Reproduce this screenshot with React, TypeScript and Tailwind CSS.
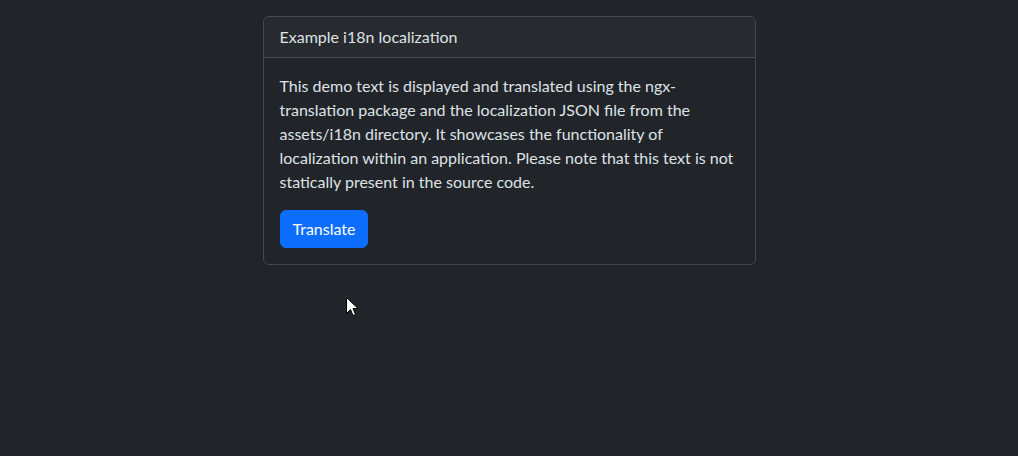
const lines = [
  "This demo text is displayed and translated using the ngx-",
  "translation package and the localization JSON file from the",
  "assets/i18n directory. It showcases the functionality of",
  "localization within an application. Please note that this text is not",
  "statically present in the source code.",
];

const Cursor = () => (
  <svg
    className="absolute left-[346px] top-[297px]"
    width="13"
    height="20"
    viewBox="0 0 13 20"
  >
    <path
      d="M0.5 0.5 L0.5 16.5 L4.5 12.5 L7 18.5 L9.5 17.5 L7 11.5 L12 11.5 Z"
      fill="#ffffff"
      stroke="#000000"
      strokeWidth="1"
      strokeLinejoin="miter"
    />
  </svg>
);

const App = () => {
  return (
    <div
      className="relative min-h-[456px] w-full bg-[#212529] text-[#dee2e6] text-base leading-6 pt-4"
      style={{ fontFamily: '"Lato", "Open Sans", sans-serif' }}
    >
      <div className="mx-auto w-[493px] rounded-md border border-[#45484c] overflow-hidden">
        <div className="bg-[#272b2f] border-b border-[#45484c] px-4 py-2">
          Example i18n localization
        </div>
        <div className="p-4">
          <p className="mb-4">
            {lines.map((line, i) => (
              <span key={i} className="block whitespace-nowrap">
                {line}
              </span>
            ))}
          </p>
          <button
            type="button"
            className="bg-[#0d6efd] text-white rounded-md px-3 py-1.5 border border-[#0d6efd] leading-6"
          >
            Translate
          </button>
        </div>
      </div>
      <Cursor />
    </div>
  );
};

export default App;
